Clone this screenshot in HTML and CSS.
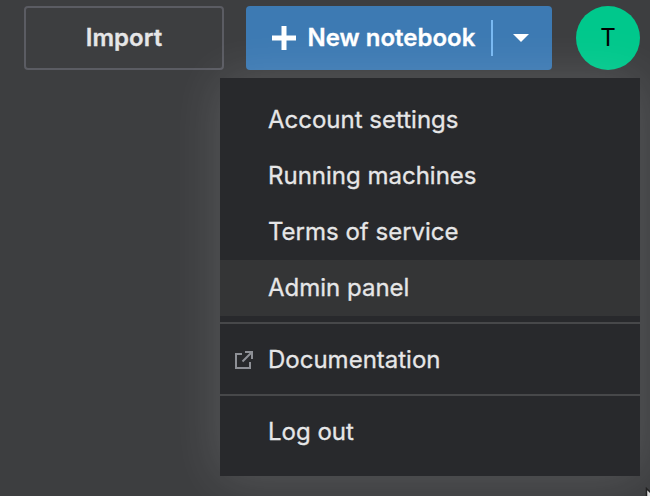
FILE: index.html
```html
<!DOCTYPE html>
<html lang="en">
<head>
<meta charset="utf-8">
<title>Notebooks</title>
<link rel="stylesheet" href="styles.css">
</head>
<body>
<header class="toolbar">
  <button class="button button-import">Import</button>
  <div class="button button-new">
    <svg class="plus" width="24" height="24" viewBox="0 0 24 24"><path d="M12 0v24M0 12h24" stroke="#fff" stroke-width="5"/></svg>
    <span class="new-label">New notebook</span>
    <span class="split"></span>
    <svg class="caret" width="16" height="8" viewBox="0 0 16 8"><path d="M0 0h16L8 8z" fill="#fff"/></svg>
  </div>
  <div class="avatar">T</div>
</header>
<nav class="menu">
  <a class="item">Account settings</a>
  <a class="item">Running machines</a>
  <a class="item">Terms of service</a>
  <a class="item item-active">Admin panel</a>
  <hr class="divider">
  <a class="item item-icon">
    <svg class="external" width="20" height="20" viewBox="0 0 20 20" fill="none" stroke="#8e9096" stroke-width="2"><path d="M8 4H2v14h14v-6M11 2h7v7M17.500 2.500L8.500 11.500"/></svg>
    Documentation
  </a>
  <hr class="divider">
  <a class="item">Log out</a>
</nav>
<svg class="pointer" width="5" height="9" viewBox="0 0 5 9"><path d="M1.500 1.500v12L9 9z" fill="#ddd" stroke="#222" stroke-width="1.500"/></svg>
</body>
</html>
```
FILE: styles.css
```css
* {
  box-sizing: border-box;
}

body {
  margin: 0;
  height: 496px;
  overflow: hidden;
  background: #3d3e40;
  color: #e6e6e7;
  font-family: Inter, "Liberation Sans", sans-serif;
  font-size: 24px;
  -webkit-text-stroke: 0.3px currentColor;
}

.toolbar {
  display: flex;
  padding: 6px 10px 0 24px;
}

.button {
  height: 64px;
  border-radius: 4px;
  font: inherit;
  font-weight: 600;
}

.button-import {
  width: 200px;
  margin-right: 22px;
  padding: 0 0 2px;
  border: 2px solid #5b5c63;
  background: none;
  color: #e6e6e7;
}

.button-new {
  display: flex;
  align-items: center;
  width: 306px;
  margin-right: 24px;
  padding-left: 26px;
  background: #3d7ab3;
  color: #fff;
}

.new-label {
  width: 168.500px;
  margin: 0 15px 2px 11.500px;
  white-space: nowrap;
}

.split {
  width: 2px;
  height: 36px;
  background: #79b9f2;
}

.caret {
  margin-left: 20px;
}

.avatar {
  width: 64px;
  height: 64px;
  border-radius: 50%;
  background: #00c88c;
  color: #000;
  line-height: 64px;
  text-align: center;
  -webkit-text-stroke: 0;
}

.menu {
  position: absolute;
  top: 78px;
  left: 220px;
  width: 420px;
  height: 398px;
  padding-top: 14px;
  background: #28292c;
  box-shadow: 0 0 48px rgba(255, 255, 255, 0.14);
}

.item {
  display: flex;
  align-items: center;
  height: 56px;
  padding: 0 0 2px 48px;
}

.item-active {
  background: #343536;
}

.item-icon {
  padding-left: 14px;
}

.external {
  margin: 1px 14px 0 0;
}

.divider {
  height: 2px;
  margin: 6px 0 8px;
  border: 0;
  background: #47484a;
}

.pointer {
  position: absolute;
  right: 0;
  bottom: 0;
}
```
